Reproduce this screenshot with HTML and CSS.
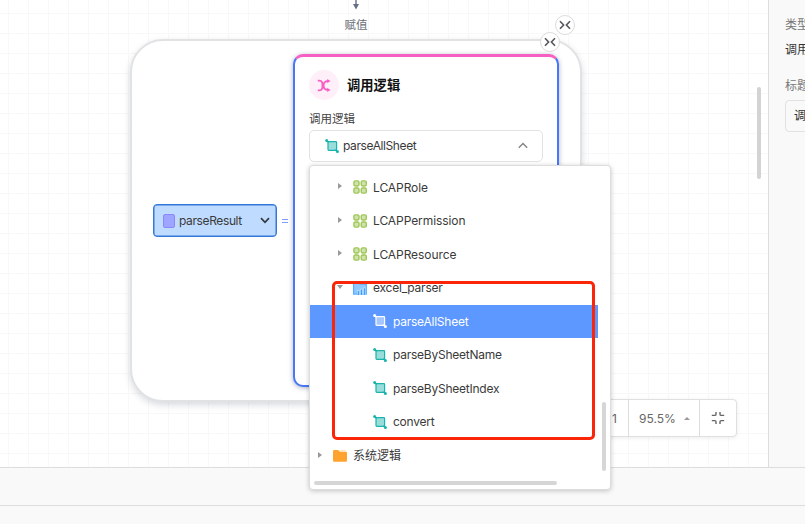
FILE: index.html
```html
<!DOCTYPE html>
<html lang="zh-CN">
<head>
<meta charset="utf-8">
<title>调用逻辑</title>
<link rel="stylesheet" href="styles.css">
</head>
<body>
<svg class="defs" width="0" height="0" aria-hidden="true">
  <symbol id="logic" viewBox="0 0 14 14">
    <path d="M1.5 1.5 3.5 3.5M10.5 10.5l2 2" stroke="currentColor" stroke-width="1.2"/>
    <rect x="3" y="2.6" width="8.6" height="8.8" rx=".8" fill="currentColor" fill-opacity=".45" stroke="currentColor" stroke-width="1.2"/>
    <circle cx="1.7" cy="1.5" r="1.5" fill="currentColor"/><circle cx="12.4" cy="12.5" r="1.5" fill="currentColor"/>
  </symbol>
  <symbol id="module" viewBox="0 0 14 14">
    <g fill="#cfe3ac" stroke="#a0c656" stroke-width="1.4">
      <rect x=".9" y=".9" width="5.1" height="5.1" rx="1.4"/><rect x="8.2" y=".9" width="5.1" height="5.1" rx="1.4"/>
      <rect x=".9" y="8" width="5.1" height="5.1" rx="1.4"/><rect x="8.2" y="8" width="5.1" height="5.1" rx="1.4"/>
    </g>
  </symbol>
  <symbol id="collapse" viewBox="0 0 12 10">
    <path d="M1 1.2 4.6 5 1 8.8M11 1.2 7.4 5 11 8.8" fill="none" stroke="#54575c" stroke-width="1.6"/>
  </symbol>
</svg>
<div class="app">
  <div class="workspace">
    <main class="canvas">
      <div class="assign">
        <svg width="8" height="10" viewBox="0 0 8 10"><path d="M4 0v5" stroke="#667085" stroke-width="1.4"/><path d="M1 4h6L4 9.6z" fill="#667085"/></svg>
        <span>赋值</span>
      </div>
      <section class="group"></section>
      <div class="variable">
        <i class="swatch"></i><span class="variable-name">parseResult</span>
        <svg width="10" height="7" viewBox="0 0 10 7"><path d="M1 1.2 5 5.3 9 1.2" fill="none" stroke="#333840" stroke-width="1.7"/></svg>
      </div>
      <span class="equals"></span>
      <section class="card">
        <header class="card-head">
          <span class="badge"><svg width="14" height="13" viewBox="0 0 14 13"><path d="M.8 1.700h1.400C5.800 1.700 5.400 4.500 5.400 6.500S5.800 11.300 2.200 11.300H.8M12 2h-.8C7.300 2 6.600 4.500 6.600 6.500S7.300 11 11.200 11h.8" fill="none" stroke="#f85fc5" stroke-width="1.800"/><path d="m10.200 0 3.300 2-3.300 2.200zM10.200 8.800l3.300 2.200-3.300 2z" fill="#f85fc5"/></svg></span>
          <h1>调用逻辑</h1>
        </header>
        <label class="field-label">调用逻辑</label>
        <div class="select"><svg class="icon teal"><use href="#logic"/></svg><span class="latin">parseAllSheet</span>
          <svg class="chevron" width="10" height="7" viewBox="0 0 10 7"><path d="M.8 5.800 5 1.400l4.200 4.400" fill="none" stroke="#858585" stroke-width="1.400"/></svg>
        </div>
      </section>
      <button class="fold fold-outer"><svg width="12" height="10"><use href="#collapse"/></svg></button>
      <button class="fold fold-inner"><svg width="12" height="10"><use href="#collapse"/></svg></button>
      <i class="canvas-scroll"></i>
      <div class="zoombar">
        <span class="zoom-one">1</span>
        <span class="zoom-level">95.5%<i class="up"></i></span>
        <span class="zoom-fit"><svg width="14" height="14" viewBox="0 0 14 14"><path d="M5 1v2.200Q5 4.400 3.800 4.400H.8M9 1v2.200q0 1.200 1.200 1.200h3M5 13v-2.200q0-1.200-1.200-1.200H.8M9 13v-2.200q0-1.200 1.200-1.200h3" fill="none" stroke="#666" stroke-width="1.400"/></svg></span>
      </div>
    </main>
    <aside class="panel">
      <div class="muted">类型</div>
      <div class="value">调用</div>
      <div class="muted title-label">标题</div>
      <div class="input">调</div>
    </aside>
  </div>
  <div class="footer-bar"></div>
  <div class="footer-rest"></div>
</div>
<div class="dropdown">
  <ul class="tree">
    <li class="row lvl1"><i class="caret"></i><svg class="icon"><use href="#module"/></svg><span class="latin">LCAPRole</span></li>
    <li class="row lvl1"><i class="caret"></i><svg class="icon"><use href="#module"/></svg><span class="latin">LCAPPermission</span></li>
    <li class="row lvl1"><i class="caret"></i><svg class="icon"><use href="#module"/></svg><span class="latin">LCAPResource</span></li>
    <li class="row lvl1"><i class="caret open"></i><svg class="icon" viewBox="0 0 14 14"><path d="M.6 1.600h5l1.500 1.600h6.200v9.900H.6z" fill="#8fc9ff" stroke="#59aeff" stroke-width="1.200"/><path d="M5.300 14V9.300M8.500 14V7.800M11.700 14V6.500" stroke="#d5ebff" stroke-width="2.200"/><path d="M5.300 14V10M8.500 14V8.500M11.700 14V7.200" stroke="#3d9eff" stroke-width="1.300"/></svg><span class="latin tight">excel_parser</span></li>
    <li class="row lvl2 selected"><svg class="icon"><use href="#logic"/></svg><span class="latin">parseAllSheet</span></li>
    <li class="row lvl2"><svg class="icon teal"><use href="#logic"/></svg><span class="latin">parseBySheetName</span></li>
    <li class="row lvl2"><svg class="icon teal"><use href="#logic"/></svg><span class="latin">parseBySheetIndex</span></li>
    <li class="row lvl2"><svg class="icon teal"><use href="#logic"/></svg><span class="latin">convert</span></li>
    <li class="row lvl0"><i class="caret"></i><svg class="icon" viewBox="0 0 14 14"><path d="M0 2.200Q0 1 1.200 1h3.600q.6 0 1 .5l1 1.300h6Q14 2.800 14 4v7.500q0 1.200-1.200 1.200H1.200Q0 12.700 0 11.500z" fill="#ffa22e"/><path d="M6.500 1.200h5.600q1 0 1.200 1.200H7.400z" fill="#ffdba8"/></svg><span>系统逻辑</span></li>
  </ul>
  <i class="thumb-v"></i><i class="thumb-h"></i>
</div>
<div class="highlight"></div>
</body>
</html>
```
FILE: styles.css
```css
* { box-sizing: border-box; }
body { margin: 0; overflow: hidden; font: 12px/18px Inter, "Noto Sans CJK SC", sans-serif; color: #3a3a3a; }
.defs { position: absolute; }
svg { display: block; flex: none; }
.app { display: flex; flex-direction: column; width: 805px; height: 524px; }
.workspace { display: flex; height: 467px; }
.canvas {
  position: relative; width: 768px; overflow: hidden; background-color: #fff;
  background-image: linear-gradient(#f8f8f8 1px, transparent 1px), linear-gradient(90deg, #f8f8f8 1px, transparent 1px);
  background-size: 20px 20px; background-position: 8px 13px;
}
.panel { width: 37px; overflow: hidden; white-space: nowrap; padding: 16px 0 0 16px; background: #f9f9f9; border-left: 1px solid #ddd; font-size: 12px; }
.muted { color: #777; }
.value { margin-top: 7px; color: #333; }
.title-label { margin-top: 18px; }
.input { width: 200px; height: 32px; margin-top: 5px; padding: 6px 8px; border: 1px solid #e2e2e2; border-radius: 4px; color: #333; }
.footer-bar { height: 39px; background: #f9f9f9; border-top: 1px solid #ddd; border-bottom: 1px solid #ddd; }
.footer-rest { flex: 1; background: #f9f9f9; }

.assign { position: absolute; left: 336px; top: 0; width: 40px; display: flex; flex-direction: column; align-items: center; gap: 6px; font-size: 11.5px; color: #6b6f76; }
.group { position: absolute; left: 130px; top: 38.5px; width: 451.5px; height: 363.5px; background: #fff; border: 2px solid #e1e2e4; border-radius: 33px; box-shadow: 0 3px 7px rgba(40, 50, 80, .18); }
.variable { position: absolute; left: 153px; top: 204px; width: 124px; height: 33px; display: flex; align-items: center; padding: 0 6px 0 9px; background: #bfdbff; border: 1px solid #3479d8; border-radius: 4px; box-shadow: inset 0 0 0 .5px #3479d8; }
.variable-name { flex: 1; margin-left: 4px; letter-spacing: -.38px; }
.swatch { width: 12px; height: 14px; border-radius: 2px; background: #9ea5ff; border: 1px solid #8b88f8; }
.equals { position: absolute; left: 282px; top: 219px; width: 6px; height: 4px; border: solid #7d9dff; border-width: 1px 0; }
.card { position: absolute; left: 293px; top: 53.5px; width: 266px; height: 333px; padding: 14px; background: #fff; border: 2px solid #4977f8; border-top-color: #f760c3; border-radius: 10px; box-shadow: 0 1px 5px rgba(30, 40, 80, .35); }
.card { border-top-width: 3px; padding-top: 13px; }
.card-head { display: flex; align-items: center; gap: 8px; height: 31px; }
.badge { display: grid; place-items: center; width: 30px; height: 30px; border-radius: 50%; background: #ffeff9; }
h1 { margin: 0; font-size: 13.3px; line-height: 20px; font-weight: 700; color: #111; }
.field-label { display: block; margin-top: 9px; font-size: 11.5px; color: #444; }
.select { display: flex; align-items: center; width: 234px; height: 32px; margin-top: 2px; padding: 0 14px 0 15px; border: 1px solid #e2e2e2; border-radius: 5px; }
.select .latin { margin-left: 4px; letter-spacing: -.4px; }
.chevron { margin-left: auto; }
.icon { width: 14px; height: 14px; }
.teal { color: #1bb3ad; }
.fold { position: absolute; display: grid; place-items: center; width: 20px; height: 20px; padding: 0; background: #fff; border: 1px solid #dcdcdc; border-radius: 50%; }
.fold-outer { left: 555px; top: 15px; }
.fold-inner { left: 540px; top: 32px; }
.canvas-scroll { position: absolute; left: 757px; top: 87px; width: 4px; height: 92px; border-radius: 2px; background: #d3d3d3; }
.zoombar { position: absolute; left: 560px; top: 399px; width: 177px; height: 38px; display: flex; align-items: stretch; background: #fff; border: 1px solid #e0e0e0; border-radius: 4px; box-shadow: 0 1px 4px rgba(0, 0, 0, .08); color: #666; line-height: 37px; }
.zoom-one { width: 67px; padding-left: 51px; }
.zoom-level { display: flex; align-items: center; gap: 8px; width: 72px; padding-left: 10px; border-left: 1px solid #ddd; border-right: 1px solid #ddd; }
.up { border: 3px solid transparent; border-top: 0; border-bottom-color: #999; }
.zoom-fit { flex: 1; display: grid; place-items: center; }

.dropdown { position: absolute; left: 309px; top: 165px; width: 302px; height: 325px; padding-top: 4.4px; background: #fff; border: 1px solid #ddd; border-radius: 4px; box-shadow: 0 1px 5px rgba(0, 0, 0, .22); }
.tree { margin: 0; padding: 0; width: 288px; list-style: none; }
.row { display: flex; align-items: center; height: 33.56px; }
.row span { position: relative; top: .4px; }
.lvl0 { padding-left: 7px; }
.lvl1 { padding-left: 27px; letter-spacing: -.07px; }
.lvl2 { padding-left: 63px; letter-spacing: -.24px; }
.tight { letter-spacing: -.22px; }
.row .icon { margin-right: 6px; }
.caret { width: 16px; height: 6px; display: flex; align-items: center; margin-top: -2px; }
.caret::before { content: ""; margin-left: 1px; border: 3px solid transparent; border-left: 4px solid #999; border-right: 0; }
.caret.open::before { margin-left: 0; border: 3px solid transparent; border-top: 4px solid #999; border-bottom: 0; }
.selected { background: #5c98ff; color: #fff; }
.thumb-v { position: absolute; right: 4px; top: 236px; width: 4px; height: 69px; border-radius: 2px; background: #d6d6d6; }
.thumb-h { position: absolute; left: 4px; bottom: 4px; width: 243px; height: 4px; border-radius: 2px; background: #d6d6d6; }
.highlight { position: absolute; left: 332px; top: 281px; width: 263px; height: 159px; border: 3px solid #fb2507; border-radius: 5px; }
```
